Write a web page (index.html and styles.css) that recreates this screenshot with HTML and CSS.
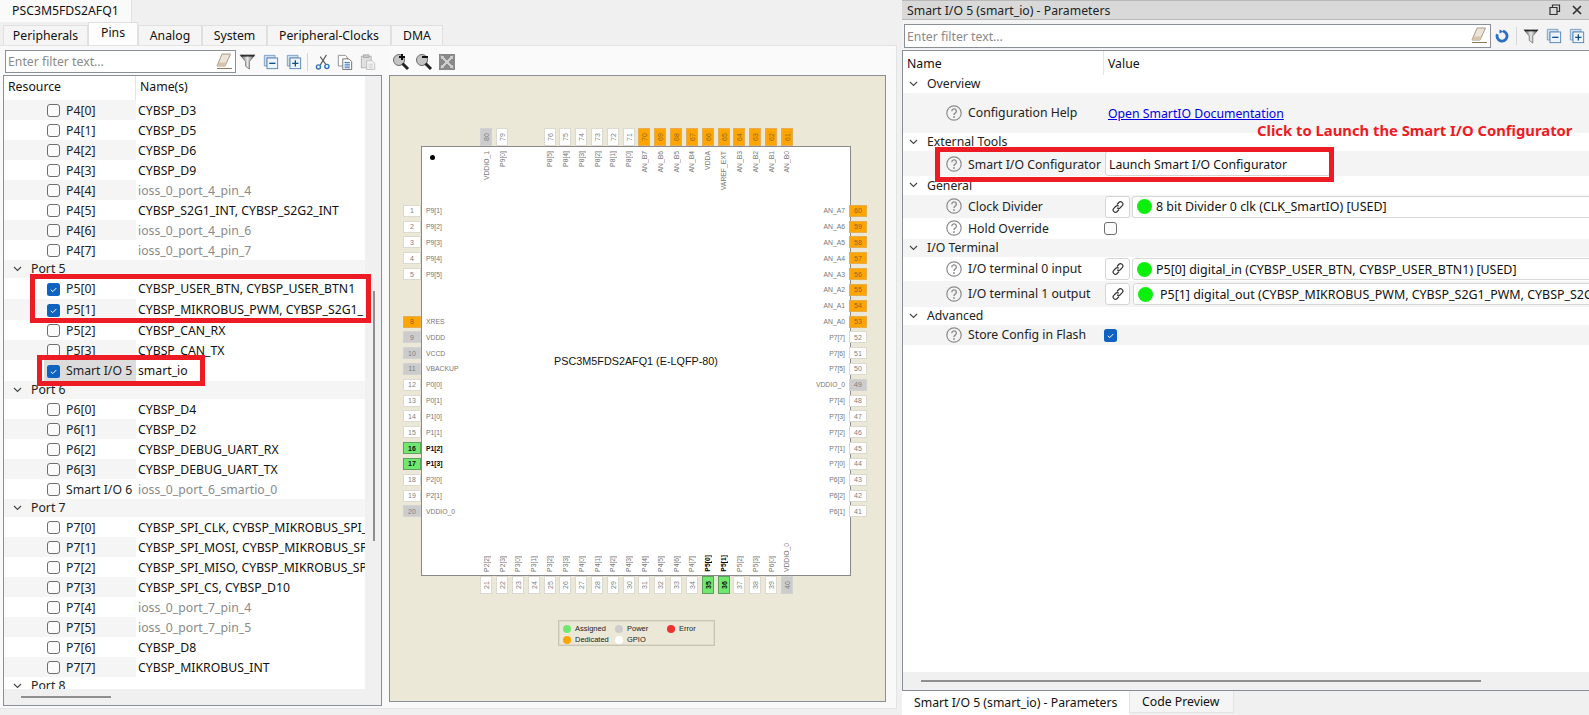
FILE: index.html
```html
<!DOCTYPE html>
<html lang="en">
<head>
<meta charset="utf-8">
<title>Device Configurator</title>
<link rel="stylesheet" href="styles.css">
</head>
<body>
<svg class="defs" width="0" height="0" aria-hidden="true">
  <defs>
    <linearGradient id="fun" x1="0" x2="1" y1="0" y2="0"><stop offset="0" stop-color="#555"/><stop offset=".5" stop-color="#e8e8e8"/><stop offset="1" stop-color="#444"/></linearGradient>
    <symbol id="i-eraser" viewBox="0 0 18 18"><path d="M7 1h8.500L10 13H2z" fill="#ece4d8" stroke="#a89a86"/><path d="M2 13h8l1.500-3.500H4z" fill="#d8c4a8"/><path d="M2 15.500h15" stroke="#8c7a5c"/></symbol>
    <symbol id="i-filter" viewBox="0 0 18 18"><path d="M1 2h16l-6 7v8l-4-3V9z" fill="url(#fun)" stroke="#666" stroke-width=".8"/><path d="M2 3h14" stroke="#222" stroke-width="1.500"/></symbol>
    <symbol id="i-minus" viewBox="0 0 18 18"><path d="M1.500 1.500h12v3h-9v9h-3z" fill="#cfdff0" stroke="#7a9cc0"/><rect x="4.500" y="4.500" width="12" height="12" fill="#eef4fb" stroke="#4f7fae"/><path d="M7 10.500h7" stroke="#0f4f8c" stroke-width="1.500"/></symbol>
    <symbol id="i-plus" viewBox="0 0 18 18"><path d="M1.500 1.500h12v3h-9v9h-3z" fill="#cfdff0" stroke="#7a9cc0"/><rect x="4.500" y="4.500" width="12" height="12" fill="#eef4fb" stroke="#4f7fae"/><path d="M7 10.500h7M10.500 7v7" stroke="#0f4f8c" stroke-width="1.500"/></symbol>
    <symbol id="i-cut" viewBox="0 0 18 18"><path d="M14 1L7 12.500M7 3l6.500 9" stroke="#555" stroke-width="1.200" fill="none"/><circle cx="5" cy="14.500" r="2.300" fill="none" stroke="#2f74c0" stroke-width="1.600"/><circle cx="14.500" cy="14" r="2.300" fill="none" stroke="#2f74c0" stroke-width="1.600"/></symbol>
    <symbol id="i-copy" viewBox="0 0 18 18"><path d="M1.500 1.500h8l2 2v10h-10z" fill="#fff" stroke="#888"/><path d="M6.500 5.500h7l3 3v9h-10z" fill="#fff" stroke="#666"/><path d="M8.500 9.500h6M8.500 11.500h6M8.500 13.500h6M8.500 15.500h6" stroke="#2a66b0"/></symbol>
    <symbol id="i-paste" viewBox="0 0 18 18"><rect x="1.500" y="2.500" width="11" height="13" fill="#e0e0e0" stroke="#b0b0b0"/><rect x="4" y="1" width="6" height="3" fill="#c8c8c8" stroke="#aaa"/><path d="M7.500 7.500h6l3 3v7h-9z" fill="#f4f4f4" stroke="#bbb"/><path d="M9.500 11.500h5M9.500 13.500h5M9.500 15.500h5" stroke="#ccc"/></symbol>
    <symbol id="i-zoomin" viewBox="0 0 18 18"><circle cx="7" cy="7" r="5.500" fill="#c4c4c4" stroke="#6e6e6e"/><path d="M10.500 10.500L16 16" stroke="#222" stroke-width="3"/><path d="M10 1v6M7 4h6" stroke="#111" stroke-width="2"/></symbol>
    <symbol id="i-zoomout" viewBox="0 0 18 18"><circle cx="7" cy="7" r="5.500" fill="#c4c4c4" stroke="#6e6e6e"/><path d="M10.500 10.500L16 16" stroke="#222" stroke-width="3"/><path d="M7 4h6" stroke="#111" stroke-width="2"/></symbol>
    <symbol id="i-fit" viewBox="0 0 18 18"><rect x="1" y="1" width="16" height="16" fill="#8a8a8a"/><path d="M2 2l5 1-1 1 3 3 3-3-1-1 5-1-1 5-1-1-3 3 3 3 1-1 1 5-5-1 1-1-3-3-3 3 1 1-5 1 1-5 1 1 3-3-3-3-1 1z" fill="#cfcfcf" stroke="#666" stroke-width=".5"/></symbol>
    <symbol id="i-refresh" viewBox="0 0 14 14"><path d="M8 2.200a5 5 0 1 1-5.600 3" fill="none" stroke="#2a6fc4" stroke-width="2.800"/><path d="M4.500 0.500l4 2-4 2z" fill="#2a6fc4"/></symbol>
    <symbol id="i-link" viewBox="0 0 14 14"><path d="M6 4.500l1.800-2a2.200 2.200 0 0 1 3.400 3.200l-2 2a2.200 2.200 0 0 1-3 0M8 9.500l-1.800 2a2.200 2.200 0 0 1-3.400-3.200l2-2a2.200 2.200 0 0 1 3 0" fill="none" stroke="#333" stroke-width="1.200"/></symbol>
    <symbol id="i-help" viewBox="0 0 16 16"><circle cx="8" cy="8" r="7.200" fill="none" stroke="#8c8c8c" stroke-width="1.200"/><path d="M5.800 6.200a2.300 2.300 0 1 1 3.400 2c-.9.500-1.200 1-1.200 1.800" fill="none" stroke="#8c8c8c" stroke-width="1.400"/><circle cx="8" cy="12" r=".9" fill="#8c8c8c"/></symbol>
    <symbol id="i-check" viewBox="0 0 13 13"><rect width="13" height="13" rx="2.500" fill="#0f62c0"/><path d="M3.800 6.800l2 1.800 3.500-3.600" fill="none" stroke="#fff" stroke-width="1"/></symbol>
    <symbol id="i-chev" viewBox="0 0 9 6"><path d="M1 1l3.500 3.500L8 1" fill="none" stroke="#444" stroke-width="1.100"/></symbol>
  </defs>
</svg>

<div class="app">
  <section class="left">
    <div class="doc-tabs"><span class="doc-tab">PSC3M5FDS2AFQ1</span></div>
    <div class="sub-tabs">
      <span class="stab w-per">Peripherals</span>
      <span class="stab active w-pin">Pins</span>
      <span class="stab w-ana">Analog</span>
      <span class="stab w-sys">System</span>
      <span class="stab w-clk">Peripheral-Clocks</span>
      <span class="stab w-dma">DMA</span>
    </div>
    <div class="left-body">
      <div class="pins-col">
        <div class="toolbar">
          <div class="filter f-left"><span class="ph">Enter filter text...</span><svg class="ic"><use href="#i-eraser"/></svg></div>
          <svg class="ic tool t1"><use href="#i-filter"/></svg>
          <svg class="ic tool"><use href="#i-minus"/></svg>
          <svg class="ic tool"><use href="#i-plus"/></svg>
          <span class="sep"></span>
          <svg class="ic tool"><use href="#i-cut"/></svg>
          <svg class="ic tool"><use href="#i-copy"/></svg>
          <svg class="ic tool"><use href="#i-paste"/></svg>
        </div>
        <div class="tree">
          <div class="tree-main">
            <div class="thead"><span class="th-res">Resource</span><span class="th-name">Name(s)</span></div>
            <div class="tbody">
              <div class="row"><div class="res"><span class="cb"></span>P4[0]</div><div class="name">CYBSP_D3</div></div>
              <div class="row"><div class="res"><span class="cb"></span>P4[1]</div><div class="name">CYBSP_D5</div></div>
              <div class="row"><div class="res"><span class="cb"></span>P4[2]</div><div class="name">CYBSP_D6</div></div>
              <div class="row"><div class="res"><span class="cb"></span>P4[3]</div><div class="name">CYBSP_D9</div></div>
              <div class="row"><div class="res"><span class="cb"></span>P4[4]</div><div class="name dim">ioss_0_port_4_pin_4</div></div>
              <div class="row"><div class="res"><span class="cb"></span>P4[5]</div><div class="name">CYBSP_S2G1_INT, CYBSP_S2G2_INT</div></div>
              <div class="row"><div class="res"><span class="cb"></span>P4[6]</div><div class="name dim">ioss_0_port_4_pin_6</div></div>
              <div class="row"><div class="res"><span class="cb"></span>P4[7]</div><div class="name dim">ioss_0_port_4_pin_7</div></div>
              <div class="group"><svg class="chev"><use href="#i-chev"/></svg>Port 5</div>
              <div class="row tall"><div class="res"><svg class="cbx"><use href="#i-check"/></svg>P5[0]</div><div class="name">CYBSP_USER_BTN, CYBSP_USER_BTN1</div></div>
              <div class="row tall"><div class="res"><svg class="cbx"><use href="#i-check"/></svg>P5[1]</div><div class="name">CYBSP_MIKROBUS_PWM, CYBSP_S2G1_</div></div>
              <div class="row"><div class="res"><span class="cb"></span>P5[2]</div><div class="name">CYBSP_CAN_RX</div></div>
              <div class="row"><div class="res"><span class="cb"></span>P5[3]</div><div class="name">CYBSP_CAN_TX</div></div>
              <div class="row tall"><div class="res selected"><svg class="cbx"><use href="#i-check"/></svg>Smart I/O 5</div><div class="name">smart_io</div></div>
              <div class="group"><svg class="chev"><use href="#i-chev"/></svg>Port 6</div>
              <div class="row"><div class="res"><span class="cb"></span>P6[0]</div><div class="name">CYBSP_D4</div></div>
              <div class="row"><div class="res"><span class="cb"></span>P6[1]</div><div class="name">CYBSP_D2</div></div>
              <div class="row"><div class="res"><span class="cb"></span>P6[2]</div><div class="name">CYBSP_DEBUG_UART_RX</div></div>
              <div class="row"><div class="res"><span class="cb"></span>P6[3]</div><div class="name">CYBSP_DEBUG_UART_TX</div></div>
              <div class="row"><div class="res"><span class="cb"></span>Smart I/O 6</div><div class="name dim">ioss_0_port_6_smartio_0</div></div>
              <div class="group"><svg class="chev"><use href="#i-chev"/></svg>Port 7</div>
              <div class="row"><div class="res"><span class="cb"></span>P7[0]</div><div class="name">CYBSP_SPI_CLK, CYBSP_MIKROBUS_SPI_</div></div>
              <div class="row"><div class="res"><span class="cb"></span>P7[1]</div><div class="name">CYBSP_SPI_MOSI, CYBSP_MIKROBUS_SP</div></div>
              <div class="row"><div class="res"><span class="cb"></span>P7[2]</div><div class="name">CYBSP_SPI_MISO, CYBSP_MIKROBUS_SP</div></div>
              <div class="row"><div class="res"><span class="cb"></span>P7[3]</div><div class="name">CYBSP_SPI_CS, CYBSP_D10</div></div>
              <div class="row"><div class="res"><span class="cb"></span>P7[4]</div><div class="name dim">ioss_0_port_7_pin_4</div></div>
              <div class="row"><div class="res"><span class="cb"></span>P7[5]</div><div class="name dim">ioss_0_port_7_pin_5</div></div>
              <div class="row"><div class="res"><span class="cb"></span>P7[6]</div><div class="name">CYBSP_D8</div></div>
              <div class="row"><div class="res"><span class="cb"></span>P7[7]</div><div class="name">CYBSP_MIKROBUS_INT</div></div>
              <div class="group"><svg class="chev"><use href="#i-chev"/></svg>Port 8</div>
            </div>
          </div>
          <div class="vscroll"><span class="vthumb"></span></div>
          <div class="hscroll"><span class="hthumb"></span></div>
        </div>
      </div>

      <div class="diagram-col">
        <div class="zoombar">
          <svg class="ic zt"><use href="#i-zoomin"/></svg>
          <svg class="ic zt"><use href="#i-zoomout"/></svg>
          <svg class="ic zt"><use href="#i-fit"/></svg>
        </div>
        <div class="diagram">
          <div class="chip">
            <span class="mark"></span>
            <span class="chip-title">PSC3M5FDS2AFQ1 (E-LQFP-80)</span>

            <div class="side-top">
              <div class="vp"><b class="pb pw">80</b><i class="vt">VDDIO_1</i></div>
              <div class="vp"><b class="pb wh">79</b><i class="vt">P9[0]</i></div>
              <div class="vp"></div><div class="vp"></div>
              <div class="vp"><b class="pb wh">76</b><i class="vt">P8[5]</i></div>
              <div class="vp"><b class="pb wh">75</b><i class="vt">P8[4]</i></div>
              <div class="vp"><b class="pb wh">74</b><i class="vt">P8[3]</i></div>
              <div class="vp"><b class="pb wh">73</b><i class="vt">P8[2]</i></div>
              <div class="vp"><b class="pb wh">72</b><i class="vt">P8[1]</i></div>
              <div class="vp"><b class="pb wh">71</b><i class="vt">P8[0]</i></div>
              <div class="vp"><b class="pb or">70</b><i class="vt">AN_B7</i></div>
              <div class="vp"><b class="pb or">69</b><i class="vt">AN_B6</i></div>
              <div class="vp"><b class="pb or">68</b><i class="vt">AN_B5</i></div>
              <div class="vp"><b class="pb or">67</b><i class="vt">AN_B4</i></div>
              <div class="vp"><b class="pb or">66</b><i class="vt">VDDA</i></div>
              <div class="vp"><b class="pb or">65</b><i class="vt">VAREF_EXT</i></div>
              <div class="vp"><b class="pb or">64</b><i class="vt">AN_B3</i></div>
              <div class="vp"><b class="pb or">63</b><i class="vt">AN_B2</i></div>
              <div class="vp"><b class="pb or">62</b><i class="vt">AN_B1</i></div>
              <div class="vp"><b class="pb or">61</b><i class="vt">AN_B0</i></div>
            </div>

            <div class="side-bottom">
              <div class="vp"><i class="vt">P2[2]</i><b class="pb wh">21</b></div>
              <div class="vp"><i class="vt">P2[3]</i><b class="pb wh">22</b></div>
              <div class="vp"><i class="vt">P3[0]</i><b class="pb wh">23</b></div>
              <div class="vp"><i class="vt">P3[1]</i><b class="pb wh">24</b></div>
              <div class="vp"><i class="vt">P3[2]</i><b class="pb wh">25</b></div>
              <div class="vp"><i class="vt">P3[3]</i><b class="pb wh">26</b></div>
              <div class="vp"><i class="vt">P4[0]</i><b class="pb wh">27</b></div>
              <div class="vp"><i class="vt">P4[1]</i><b class="pb wh">28</b></div>
              <div class="vp"><i class="vt">P4[2]</i><b class="pb wh">29</b></div>
              <div class="vp"><i class="vt">P4[3]</i><b class="pb wh">30</b></div>
              <div class="vp"><i class="vt">P4[4]</i><b class="pb wh">31</b></div>
              <div class="vp"><i class="vt">P4[5]</i><b class="pb wh">32</b></div>
              <div class="vp"><i class="vt">P4[6]</i><b class="pb wh">33</b></div>
              <div class="vp"><i class="vt">P4[7]</i><b class="pb wh">34</b></div>
              <div class="vp"><i class="vt on">P5[0]</i><b class="pb gr">35</b></div>
              <div class="vp"><i class="vt on">P5[1]</i><b class="pb gr">36</b></div>
              <div class="vp"><i class="vt">P5[2]</i><b class="pb wh">37</b></div>
              <div class="vp"><i class="vt">P5[3]</i><b class="pb wh">38</b></div>
              <div class="vp"><i class="vt">P6[0]</i><b class="pb wh">39</b></div>
              <div class="vp"><i class="vt">VDDIO_0</i><b class="pb pw">40</b></div>
            </div>

            <div class="side-left">
              <div class="hp"><b class="pb wh">1</b><i>P9[1]</i></div>
              <div class="hp"><b class="pb wh">2</b><i>P9[2]</i></div>
              <div class="hp"><b class="pb wh">3</b><i>P9[3]</i></div>
              <div class="hp"><b class="pb wh">4</b><i>P9[4]</i></div>
              <div class="hp"><b class="pb wh">5</b><i>P9[5]</i></div>
              <div class="hp"></div><div class="hp"></div>
              <div class="hp"><b class="pb or">8</b><i>XRES</i></div>
              <div class="hp"><b class="pb pw">9</b><i>VDDD</i></div>
              <div class="hp"><b class="pb pw">10</b><i>VCCD</i></div>
              <div class="hp"><b class="pb pw">11</b><i>VBACKUP</i></div>
              <div class="hp"><b class="pb wh">12</b><i>P0[0]</i></div>
              <div class="hp"><b class="pb wh">13</b><i>P0[1]</i></div>
              <div class="hp"><b class="pb wh">14</b><i>P1[0]</i></div>
              <div class="hp"><b class="pb wh">15</b><i>P1[1]</i></div>
              <div class="hp"><b class="pb gr">16</b><i class="on">P1[2]</i></div>
              <div class="hp"><b class="pb gr">17</b><i class="on">P1[3]</i></div>
              <div class="hp"><b class="pb wh">18</b><i>P2[0]</i></div>
              <div class="hp"><b class="pb wh">19</b><i>P2[1]</i></div>
              <div class="hp"><b class="pb pw">20</b><i>VDDIO_0</i></div>
            </div>

            <div class="side-right">
              <div class="hp"><i>AN_A7</i><b class="pb or">60</b></div>
              <div class="hp"><i>AN_A6</i><b class="pb or">59</b></div>
              <div class="hp"><i>AN_A5</i><b class="pb or">58</b></div>
              <div class="hp"><i>AN_A4</i><b class="pb or">57</b></div>
              <div class="hp"><i>AN_A3</i><b class="pb or">56</b></div>
              <div class="hp"><i>AN_A2</i><b class="pb or">55</b></div>
              <div class="hp"><i>AN_A1</i><b class="pb or">54</b></div>
              <div class="hp"><i>AN_A0</i><b class="pb or">53</b></div>
              <div class="hp"><i>P7[7]</i><b class="pb wh">52</b></div>
              <div class="hp"><i>P7[6]</i><b class="pb wh">51</b></div>
              <div class="hp"><i>P7[5]</i><b class="pb wh">50</b></div>
              <div class="hp"><i>VDDIO_0</i><b class="pb pw">49</b></div>
              <div class="hp"><i>P7[4]</i><b class="pb wh">48</b></div>
              <div class="hp"><i>P7[3]</i><b class="pb wh">47</b></div>
              <div class="hp"><i>P7[2]</i><b class="pb wh">46</b></div>
              <div class="hp"><i>P7[1]</i><b class="pb wh">45</b></div>
              <div class="hp"><i>P7[0]</i><b class="pb wh">44</b></div>
              <div class="hp"><i>P6[3]</i><b class="pb wh">43</b></div>
              <div class="hp"><i>P6[2]</i><b class="pb wh">42</b></div>
              <div class="hp"><i>P6[1]</i><b class="pb wh">41</b></div>
            </div>
          </div>

          <div class="legend">
            <span class="lg"><em class="dot d-g"></em>Assigned</span>
            <span class="lg"><em class="dot d-p"></em>Power</span>
            <span class="lg"><em class="dot d-r"></em>Error</span>
            <span class="lg"><em class="dot d-o"></em>Dedicated</span>
            <span class="lg"><em class="dot d-w"></em>GPIO</span>
          </div>
        </div>
      </div>
    </div>
  </section>

  <section class="right">
    <div class="titlebar">
      <span>Smart I/O 5 (smart_io) - Parameters</span>
      <span class="winbtns">
        <svg class="wb" viewBox="0 0 12 12"><path d="M3.500 3.500V1h7v6.500H8M1 3.500h7v7H1z" fill="none" stroke="#333" stroke-width="1.200"/></svg>
        <svg class="wb" viewBox="0 0 12 12"><path d="M2 2l8 8M10 2l-8 8" stroke="#333" stroke-width="1.700"/></svg>
      </span>
    </div>
    <div class="rtoolbar">
      <div class="filter f-right"><span class="ph">Enter filter text...</span><svg class="ic"><use href="#i-eraser"/></svg></div>
      <svg class="ic r-refresh"><use href="#i-refresh"/></svg>
      <span class="sep"></span>
      <svg class="ic r-tool"><use href="#i-filter"/></svg>
      <svg class="ic r-tool"><use href="#i-minus"/></svg>
      <svg class="ic r-tool"><use href="#i-plus"/></svg>
    </div>
    <div class="ptree">
      <div class="phead"><span class="pn">Name</span><span class="pv">Value</span></div>
      <div class="pbody">
        <div class="pg h18"><svg class="chev"><use href="#i-chev"/></svg>Overview</div>
        <div class="pr h40"><div class="pl"><svg class="help"><use href="#i-help"/></svg>Configuration Help</div><div class="pval"><a class="link" href="#">Open SmartIO Documentation</a></div></div>
        <div class="pg h18"><svg class="chev"><use href="#i-chev"/></svg>External Tools</div>
        <div class="pr h25"><div class="pl"><svg class="help"><use href="#i-help"/></svg>Smart I/O Configurator</div><div class="pval"><span class="btn launch">Launch Smart I/O Configurator</span></div></div>
        <div class="pg h19"><svg class="chev"><use href="#i-chev"/></svg>General</div>
        <div class="pr h23"><div class="pl"><svg class="help"><use href="#i-help"/></svg>Clock Divider</div><div class="pval"><span class="lnk"><svg><use href="#i-link"/></svg></span><span class="drop"><em class="gdot"></em>8 bit Divider 0 clk (CLK_SmartIO) [USED]</span></div></div>
        <div class="pr h21"><div class="pl"><svg class="help"><use href="#i-help"/></svg>Hold Override</div><div class="pval"><span class="cb"></span></div></div>
        <div class="pg h18"><svg class="chev"><use href="#i-chev"/></svg>I/O Terminal</div>
        <div class="pr h24"><div class="pl"><svg class="help"><use href="#i-help"/></svg>I/O terminal 0 input</div><div class="pval"><span class="lnk"><svg><use href="#i-link"/></svg></span><span class="drop"><em class="gdot"></em>P5[0] digital_in (CYBSP_USER_BTN, CYBSP_USER_BTN1) [USED]</span></div></div>
        <div class="pr h26"><div class="pl"><svg class="help"><use href="#i-help"/></svg>I/O terminal 1 output</div><div class="pval"><span class="lnk"><svg><use href="#i-link"/></svg></span><span class="drop d2"><em class="gdot"></em>P5[1] digital_out (CYBSP_MIKROBUS_PWM, CYBSP_S2G1_PWM, CYBSP_S2G</span></div></div>
        <div class="pg h18"><svg class="chev"><use href="#i-chev"/></svg>Advanced</div>
        <div class="pr h20"><div class="pl"><svg class="help"><use href="#i-help"/></svg>Store Config in Flash</div><div class="pval"><svg class="cbx"><use href="#i-check"/></svg></div></div>
      </div>
      <div class="phscroll"><span class="phthumb"></span></div>
    </div>
    <div class="btabs">
      <span class="btab active">Smart I/O 5 (smart_io) - Parameters</span>
      <span class="btab code">Code Preview</span>
    </div>
  </section>

  <span class="redbox rb1"></span>
  <span class="redbox rb2"></span>
  <span class="redbox rb3"></span>
  <span class="callout">Click to Launch the Smart I/O Configurator</span>
</div>
</body>
</html>
```
FILE: styles.css
```css
* { box-sizing: border-box; }
html, body { margin: 0; padding: 0; width: 1589px; height: 715px; overflow: hidden; }
body { font-family: "Noto Sans", "Open Sans", sans-serif; font-size: 12.250px; color: #111; background: #f0f0f0; }
.defs { position: absolute; }
.app { position: relative; display: flex; width: 1589px; height: 715px; overflow: hidden; }

/* Left */
.left { width: 902px; height: 715px; display: flex; flex-direction: column; background: #f0f0f0; }
.doc-tabs { height: 22px; display: flex; }
.doc-tab { width: 132px; height: 22px; line-height: 21px; padding-left: 12px; background: #fafafa; border-right: 1px solid #e2e2e2; }
.sub-tabs { height: 23px; display: flex; align-items: flex-end; padding-left: 3px; }
.stab { height: 20px; line-height: 19px; text-align: center; background: #f5f5f5; border: 1px solid #e0e0e0; border-bottom: 0; }
.stab.active { height: 23px; line-height: 20px; background: #fdfdfd; position: relative; }
.w-per { width: 85px; } .w-pin { width: 50px; } .w-ana { width: 64px; } .w-sys { width: 65px; } .w-clk { width: 124px; } .w-dma { width: 52px; }
.left-body { width: 897px; height: 664px; display: flex; background: #f9f9f9; border: 1px solid #e3e3e3; border-left: 0; padding-left: 3px; }
.pins-col { width: 379px; flex: none; display: flex; flex-direction: column; }
.toolbar { height: 29px; display: flex; align-items: center; padding-top: 2px; }
.filter { height: 23px; flex: none; display: flex; align-items: center; justify-content: space-between; background: #fff; border: 1px solid #8a8f95; padding: 0 2px 0 2px; }
.f-left { width: 231px; margin-left: 2px; }
.f-right { width: 587px; margin-left: 2px; }
.ph { color: #8a8a8a; }
.ic { width: 18px; height: 18px; flex: none; }
.tool { margin-left: 5px; width: 16px; height: 16px; }
.tool.t1 { margin-left: 3px; width: 17px; height: 17px; }
.toolbar .tool { margin-right: 2px; }
.sep { width: 1px; height: 18px; background: #d5d5d5; margin: 0 1px 0 3px; flex: none; }
.tree { height: 631px; display: grid; grid-template-columns: 361px 16px; grid-template-rows: 613px 16px; border: 1px solid #8a8f95; background: #fff; }
.tree-main { overflow: hidden; background: #fff; }
.thead { height: 24px; display: flex; line-height: 22px; }
.th-res { width: 132px; padding-left: 4px; border-right: 1px solid #e4e4e4; }
.th-name { padding-left: 4px; }
.tbody { display: flex; flex-direction: column; }
.row { height: 20px; flex: none; display: flex; line-height: 20px; }
.row.tall { height: 21px; }
.res { width: 132px; flex: none; display: flex; align-items: center; padding: 1px 0 0 43px; color: #222; }
.row:nth-child(odd) .res { background: #f5f5f5; }
.row .res.selected, .row:nth-child(odd) .res.selected { background: linear-gradient(to right, transparent 40px, #dcdcdc 40px); }
.name { padding: 1px 0 0 2px; white-space: nowrap; overflow: hidden; flex: 1; min-width: 0; }
.dim { color: #8a8a8a; }
.cb { display: inline-block; flex: none; width: 13px; height: 13px; background: #fbfbfb; border: 1px solid #6e6e6e; border-radius: 3px; margin-right: 6px; }
.cbx { width: 13px; height: 13px; flex: none; margin-right: 6px; }
.group { height: 18px; flex: none; display: flex; align-items: center; padding-left: 9px; color: #222; line-height: 18px; }
.group:nth-child(odd) { background: #f5f5f5; }
.chev { width: 9px; height: 6px; margin-right: 9px; flex: none; }
.vscroll { grid-row: 1 / 3; grid-column: 2; background: #f0f0f0; padding: 215px 0 0 8px; }
.vthumb { display: block; width: 2px; height: 250px; background: #8f8f8f; }
.hscroll { background: #f0f0f0; padding: 7px 0 0 17px; }
.hthumb { display: block; width: 90px; height: 2px; background: #8f8f8f; }

.diagram-col { width: 512px; flex: none; display: flex; flex-direction: column; padding-left: 4px; }
.zoombar { height: 29px; flex: none; display: flex; align-items: center; padding: 2px 0 0 6px; gap: 5px; background: #fafafa; }
.diagram { width: 497px; height: 627px; border: 1px solid #8a8f95; background: #ebe8d8; margin-left: 3px; }

/* Chip */
.chip { position: relative; width: 430px; height: 430px; margin: 70px 0 0 31px; background: #fff; border: 1px solid #8a8a8a; font-family: "Liberation Sans", sans-serif; font-size: 6.800px; color: #777; }
.mark { position: absolute; left: 8px; top: 8px; width: 5px; height: 5px; border-radius: 50%; background: #000; }
.chip-title { position: absolute; left: 0; right: 0; top: 208px; text-align: center; font-size: 10.800px; color: #111; }
.side-top, .side-bottom { position: absolute; left: 56.300px; display: flex; }
.side-top { top: -19px; }
.side-bottom { bottom: -19px; }
.vp { width: 15.840px; display: flex; flex-direction: column; align-items: center; gap: 5px; }
.side-bottom .vp { justify-content: flex-end; gap: 4px; height: 60px; }
.pb { font-weight: 400; flex: none; display: flex; align-items: center; justify-content: center; color: #808080; font-size: 7px; }
.vp .pb { width: 12px; height: 18px; writing-mode: vertical-rl; transform: rotate(180deg); }
.hp .pb { width: 18px; height: 12px; }
.wh { background: #fff; border: 1px solid #dcdad0; }
.or { background: #ffa500; border: 1px solid #e6ad52; color: #8a6a30; }
.pw { background: #cccccc; border: 1px solid #d2d2d2; }
.gr { background: #70e870; border: 1px solid #5f9f60; color: #111; font-weight: 700; }
.vt { font-style: normal; writing-mode: vertical-rl; transform: rotate(180deg); white-space: nowrap; }
.on { color: #000; font-weight: 700; }
.side-left, .side-right { position: absolute; top: 55.800px; display: flex; flex-direction: column; }
.side-left { left: -19px; }
.side-right { right: -17px; align-items: flex-end; }
.hp { height: 15.840px; display: flex; align-items: center; }
.hp i { font-style: normal; white-space: nowrap; }
.side-left .hp i { margin-left: 5px; }
.side-right .hp i { margin-right: 4px; }
.legend { width: 157px; height: 26px; margin: 44px 0 0 168px; border: 1px solid #c7c5b3; box-shadow: inset 0 0 0 1px #dedbca; display: grid; grid-template-columns: 52px 52px 1fr; padding: 2px 0 0 4px; font-family: "Liberation Sans", sans-serif; font-size: 7.500px; color: #222; }
.lg { display: flex; align-items: center; gap: 4px; height: 11px; }
.dot { width: 8px; height: 8px; border-radius: 50%; flex: none; }
.d-g { background: #70e870; } .d-p { background: #cccccc; } .d-r { background: #f03030; } .d-o { background: #ffa500; } .d-w { background: #fff; }

/* Right */
.right { width: 687px; height: 715px; display: flex; flex-direction: column; background: #fff; }
.titlebar { height: 20px; display: flex; justify-content: space-between; align-items: center; padding-left: 5px; background: #d9d9d9; border-top: 1px solid #b9b9b9; border-bottom: 1px solid #b9b9b9; color: #222; }
.winbtns { display: flex; gap: 10px; align-items: center; padding-right: 6px; }
.wb { width: 12px; height: 12px; }
.rtoolbar { height: 30px; display: flex; align-items: center; background: #f4f4f4; }
.rtoolbar .filter { height: 24px; margin-top: 2px; }
.r-refresh { width: 14px; height: 14px; margin: 2px 7px 0 4px; }
.rtoolbar .sep { margin: 2px 6px 0 0; }
.r-tool { width: 16px; height: 16px; margin: 2px 7px 0 0; }
.ptree { width: 100%; height: 641px; display: flex; flex-direction: column; border-top: 1px solid #8a8f95; border-left: 1px solid #8a8f95; border-bottom: 1px solid #8a8f95; }
.phead { height: 24px; flex: none; display: flex; line-height: 26px; }
.pn { width: 201px; padding-left: 4px; border-right: 1px solid #e4e4e4; }
.pv { padding-left: 4px; }
.pbody { flex: 1; display: flex; flex-direction: column; min-height: 0; }
.pg { display: flex; align-items: center; padding: 0 0 1px 6px; flex: none; color: #222; }
.pg .chev { margin-right: 9px; }
.pr { display: flex; flex: none; align-items: center; }
.pr:nth-child(even) { background: #f4f4f4; }
.pg:nth-child(even) { background: #f4f4f4; }
.h18 { height: 18px; } .h19 { height: 19px; } .h20 { height: 20px; } .h21 { height: 21px; } .h23 { height: 23px; } .h24 { height: 24px; } .h25 { height: 25px; } .h26 { height: 26px; } .h40 { height: 40px; }
.pl { width: 201px; flex: none; display: flex; align-items: center; padding: 0 0 1px 43px; color: #222; white-space: nowrap; }
.h25 .pl { padding: 1px 0 0 43px; }
.help { width: 16px; height: 16px; margin-right: 6px; flex: none; }
.pval { flex: 1; min-width: 0; display: flex; align-items: center; padding-left: 1px; overflow: hidden; white-space: nowrap; }
.pval .cb { margin-left: -1px; }
.pval .cbx { margin-left: -1px; }
.link { color: #0000e6; text-decoration: underline; padding-left: 3px; }
.btn { height: 25px; line-height: 25px; background: #fff; border: 1px solid #d5d5d5; border-radius: 3px; }
.launch { width: 225px; padding-left: 3px; }
.lnk { width: 25px; height: 22px; flex: none; background: #fff; border: 1px solid #d5d5d5; border-radius: 3px; display: flex; align-items: center; justify-content: center; margin-right: 2px; }
.lnk svg { width: 14px; height: 14px; }
.drop { flex: none; width: 560px; height: 22px; background: #fff; border: 1px solid #d8d8d8; border-radius: 3px; display: flex; align-items: center; padding-left: 4px; font-size: 12.450px; }
.gdot { width: 15px; height: 15px; border-radius: 50%; background: #0bf00b; margin-right: 4px; flex: none; }
.d2 { margin-left: 1px; }
.d2 .gdot { margin-right: 7px; }
.phscroll { height: 18px; flex: none; background: #f0f0f0; padding: 8px 0 0 18px; }
.phthumb { display: block; width: 560px; height: 2px; background: #8f8f8f; }
.btabs { flex: 1; display: flex; background: #f0f0f0; }
.btab { height: 24px; line-height: 24px; padding: 0 12px; white-space: nowrap; }
.btab.active { width: 227px; background: #fff; }
.btab.code { width: 105px; background: #f5f5f5; border: 1px solid #e4e4e4; border-top: 0; height: 22px; line-height: 22px; }

/* Annotations */
.redbox { position: absolute; border: 5px solid #ed1c24; pointer-events: none; }
.rb1 { left: 30px; top: 274px; width: 341px; height: 49px; }
.rb2 { left: 37px; top: 355px; width: 168px; height: 31px; }
.rb3 { left: 935px; top: 147px; width: 399px; height: 35px; }
.callout { position: absolute; left: 1257px; top: 120px; color: #ed1c24; font-weight: 700; font-size: 14.800px; line-height: 20px; white-space: nowrap; }
```
